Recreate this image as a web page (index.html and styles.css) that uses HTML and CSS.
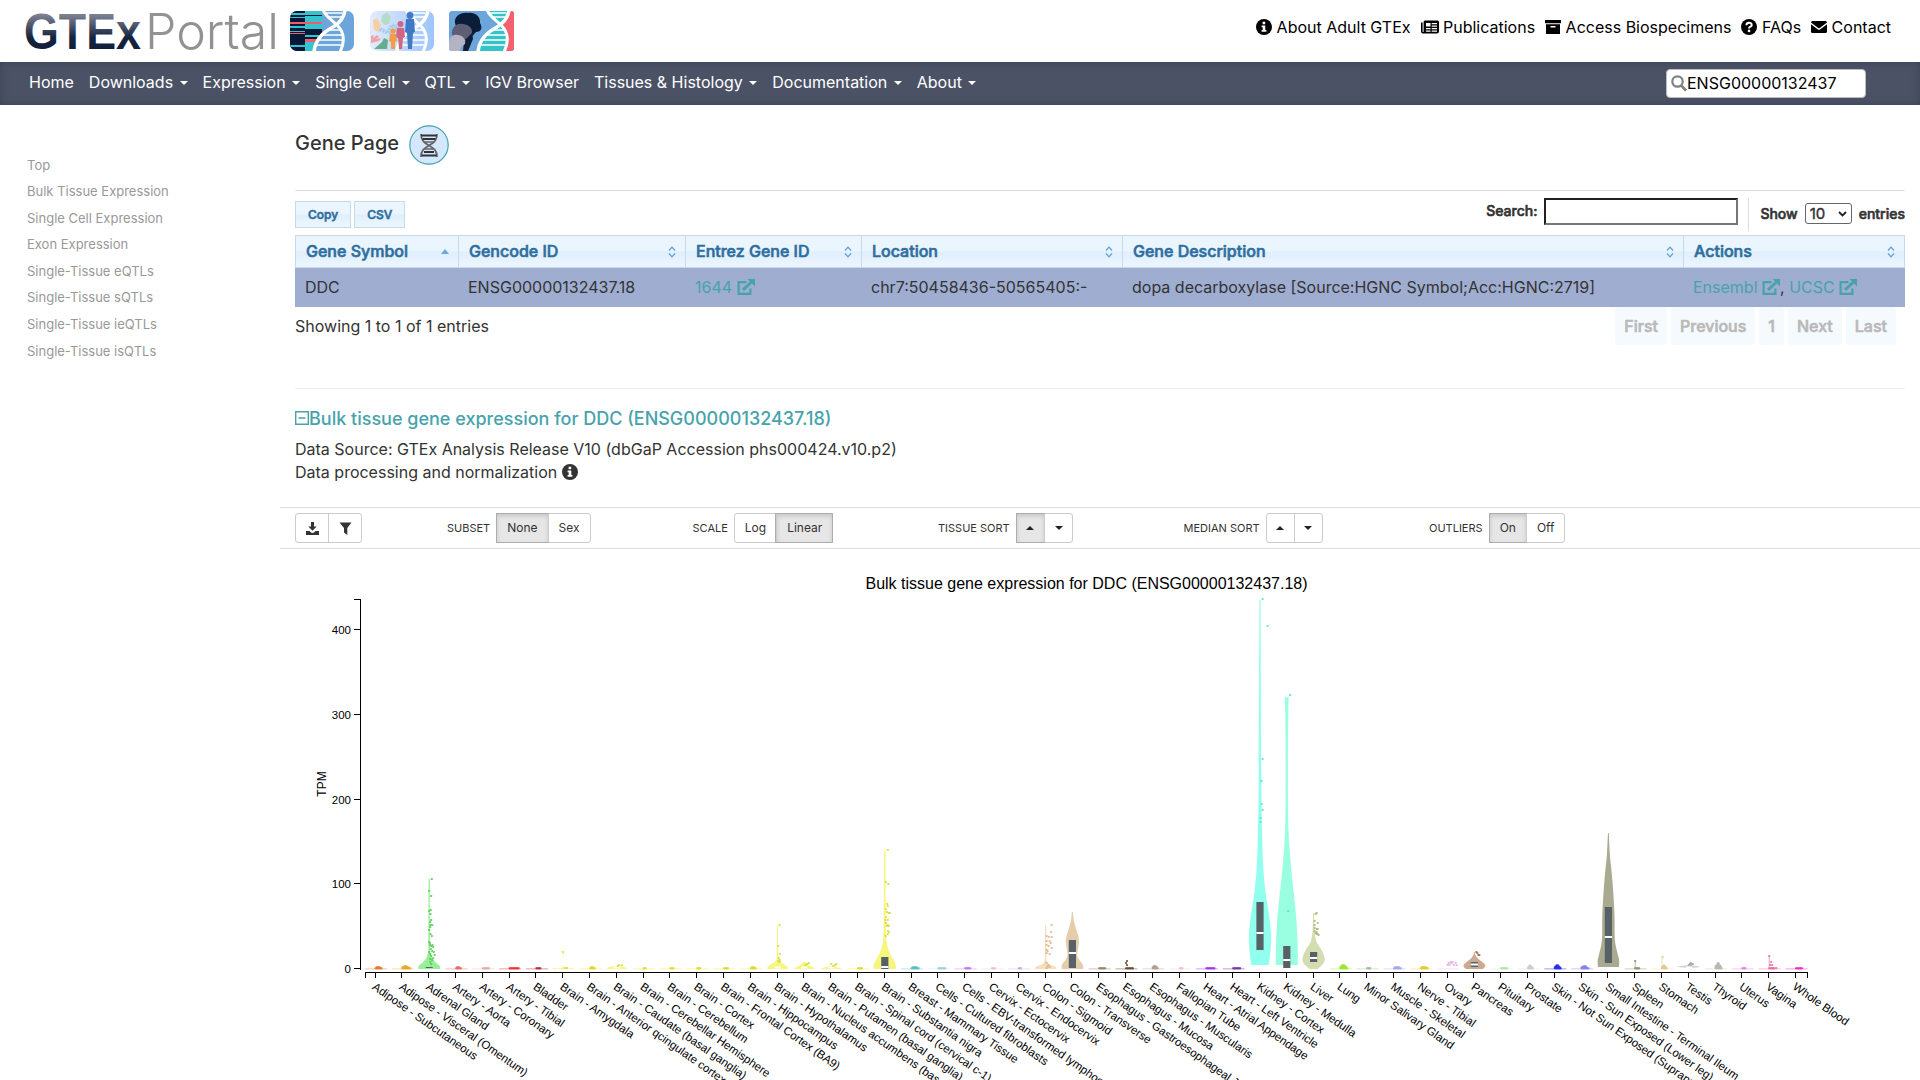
FILE: index.html
```html
<!DOCTYPE html>
<html lang="en">
<head>
<meta charset="utf-8">
<title>GTEx Portal - Gene Page</title>
<link rel="stylesheet" href="styles.css">
</head>
<body>
<svg class="defs" width="0" height="0">
  <defs>
    <linearGradient id="logoFill" x1="0" y1="0" x2="0" y2="1"><stop offset="0.2" stop-color="#7a8091"/><stop offset="0.6" stop-color="#16233f"/><stop offset="1" stop-color="#0d1c38"/></linearGradient>
    <linearGradient id="paleSky"><stop offset="0" stop-color="#e3ecfb"/><stop offset="1" stop-color="#9cc4fa"/></linearGradient>
    <clipPath id="tile"><rect width="64" height="40" rx="7"/></clipPath>
    <clipPath id="tileWide"><rect width="65" height="40" rx="3"/></clipPath>
    <symbol id="helix" viewBox="0 0 40 40">
      <g fill="none" stroke="#fff">
        <path d="M14 2h16M17 6h12M14 19h16M9 24h23M5 29h26M3 34h26" stroke-width="1.600"/>
        <path d="M11-1C14 6 20 9 25 14c7 7 9 15 3 27" stroke-width="3"/>
        <path d="M33-1C32 7 28 12 21 16 10 22 3 29 2 41" stroke-width="3.600"/>
      </g>
    </symbol>
    <symbol id="info" viewBox="0 0 16 16"><circle cx="8" cy="8" r="8"/><path fill="#fff" d="M6.6 2.7h2.6v2.5H6.6zM5.6 6.4h3.7v4.5h1.1v1.9H5.6v-1.9h1.1V8.3H5.6z"/></symbol>
    <symbol id="external" viewBox="0 0 18 16"><path fill="none" stroke="currentColor" stroke-width="2.200" d="M9.500 3.200H1.600V14.800h11.800V9.500"/><path fill="none" stroke="currentColor" stroke-width="3" d="M6 10.800 14.500 3"/><path fill="currentColor" d="M10.500 0H18v7.500z"/></symbol>
    <symbol id="sort" viewBox="0 0 8 12"><path d="M1 4.500 4 1.200 7 4.500M1 7.500 4 10.800 7 7.500" fill="none" stroke="#5a9fd4" stroke-width="1.200"/></symbol>
  </defs>
</svg>

<header class="top">
  <div class="brand">
    <svg class="logo" width="256" height="62" viewBox="0 0 256 62">
      <text class="logo-bold" x="0" y="49" textLength="117" lengthAdjust="spacingAndGlyphs">GTEx</text>
      <text class="logo-thin" x="121" y="49" textLength="134" lengthAdjust="spacingAndGlyphs">Portal</text>
    </svg>
    <svg class="tile t1" width="64" height="40" viewBox="0 0 64 40"><g clip-path="url(#tile)">
      <path fill="#6ca5d9" d="M0 0h64v40H0z"/><path fill="#071838" d="M0 0h15v40H0z"/><path fill="#35c3cd" d="M15 0h17v40H15z"/>
      <path fill="#35c3cd" d="M0 2h15v2H0zM0 6h15v1H0zM0 15h15v2H0zM0 20h15v1H0zM0 34h15v2H0z"/><path fill="#ee5f6b" d="M0 11h15v2H0zM0 22h15v1H0zM15 11h17v2H15zM15 28h11v3H15z"/><path fill="#071838" d="M15 4h17v1H15zM15 18h17v6H15zM15 26h14v2H15z"/>
      <path fill="#6ca5d9" d="M34 19 27 27 24 40h22l9-12-8-12z"/>
      <use href="#helix" x="22" y="0" width="40" height="40"/></g></svg>
    <svg class="tile t2" width="64" height="40" viewBox="0 0 64 40"><g clip-path="url(#tile)">
      <path fill="url(#paleSky)" d="M0 0h64v40H0z"/><use href="#helix" x="25" y="0" width="40" height="40"/>
      <path fill="#b5dccb" d="M12 5l5-4 4 5-2 7-5 1-3-4z"/><path fill="#f6cfa3" d="M3 9l4-2 4 7-2 7-5-2z"/><path fill="#f0a3ad" d="M1 25l3-1-1 3 4-3 2 2-3 2 5-1-2 3-4 1-4 1z"/><path fill="none" stroke="#a9c8ec" stroke-width="4" stroke-dasharray="2 1" d="M10 18l8 4 4-8 6 3-8 8"/>
      <path fill="#68ac8e" d="M4 38l8-7 2-4 4 2-1 9z"/><circle cx="23" cy="20" r="2.600" fill="#f49d46"/><path fill="#f49d46" d="M20 23h6l1 7-2 1v7h-4v-7l-2-1z"/><circle cx="30.500" cy="13" r="3" fill="#ce6684"/><path fill="#ce6684" d="M27 17h7l1 9-2 1-1 11h-3l-1-11-2-1z"/><circle cx="40" cy="4.500" r="3.400" fill="#4079c4"/><path fill="#4079c4" d="M36 8h8l1 13-2 1-1 16h-4l-1-16-2-1z"/></g></svg>
    <svg class="tile t3" width="65" height="40" viewBox="0 0 65 40"><g clip-path="url(#tileWide)">
      <path fill="#6ca5d9" d="M0 0h65v40H0z"/><path fill="#f4606c" d="M65 0H60L50 15l9 13-3 12h9z"/><path fill="#35c3c8" d="M40 0h20L52 14l7 12-3 14H29c2-11 10-17 20-24z"/>
      <path fill="#0b1d38" d="M6 12C5 5 12 1 19 2c6-1 13 3 12 10 3 5 1 9-4 9l-8 9-9-4z"/><path fill="#0b1d38" d="M14 40l1-9 8-10 1 7-5 12z"/><path fill="#5f5d74" d="M3 24c-1-8 5-12 10-11 6 0 11 4 10 9l-6 6-8 1z"/><path fill="#b4b3c4" d="M0 31c1-6 5-8 9-7 6 1 8 5 7 9l-4 3-1 4H0z"/>
      <use href="#helix" x="27" y="0" width="40" height="40"/></g></svg>
  </div>
  <nav class="quick">
    <a><svg width="16" height="16"><use href="#info"/></svg>About Adult GTEx</a>
    <a><svg width="18" height="16" viewBox="0 0 18 16"><path fill-rule="evenodd" d="M4 1.500h12.500Q18 1.500 18 3v9.500q0 2-2 2H2q-2 0-2-2V3.500h1.600v9q0 .6.500.6t.5-.6V3Q2.600 1.500 4 1.500zM5 4v3.500h4.500V4zm5.700 0v1.300H16V4zm0 2.400v1.300H16V6.400zM5 9v1.300h4.500V9zm5.700 0v1.300H16V9zM5 11.400v1.300h4.500v-1.300zm5.700 0v1.300H16v-1.300z"/></svg>Publications</a>
    <a><svg width="16" height="16" viewBox="0 0 16 16"><path fill-rule="evenodd" d="M0 1h16v3.300H0zM1 5.300h14V15H1zM5.500 7v1.600h5V7z"/></svg>Access Biospecimens</a>
    <a><svg width="16" height="16" viewBox="0 0 16 16"><circle cx="8" cy="8" r="8"/><path d="M5.400 6.200C5.500 4.500 6.500 3.800 8 3.800c3.400 0 3.400 3.300 1 4.100-.8.300-1 .7-1 1.500" fill="none" stroke="#fff" stroke-width="1.900"/><circle cx="8" cy="11.900" r="1.300" fill="#fff"/></svg>FAQs</a>
    <a><svg width="16" height="16" viewBox="0 0 16 16"><path d="M0 3.500Q0 2 1.500 2h13Q16 2 16 3.500L8.800 9q-.8.600-1.600 0zM0 5.200l6.600 5q1.400 1 2.800 0l6.600-5v7.300q0 1.500-1.500 1.500h-13Q0 14 0 12.500z"/></svg>Contact</a>
  </nav>
</header>

<div class="navbar">
  <nav class="menu">
    <a>Home</a><a class="drop">Downloads</a><a class="drop">Expression</a><a class="drop">Single Cell</a><a class="drop">QTL</a><a>IGV Browser</a><a class="drop">Tissues &amp; Histology</a><a class="drop">Documentation</a><a class="drop">About</a>
  </nav>
  <div class="find"><svg width="16" height="17" viewBox="0 0 16 17"><circle cx="6.500" cy="6.500" r="5.200" fill="none" stroke="#808080" stroke-width="2.200"/><path d="M10.300 10.600 15 15.600" stroke="#808080" stroke-width="2.800"/></svg><span>ENSG00000132437</span></div>
</div>

<div class="page">
  <aside class="toc">
    <a>Top</a><a>Bulk Tissue Expression</a><a>Single Cell Expression</a><a>Exon Expression</a><a>Single-Tissue eQTLs</a><a>Single-Tissue sQTLs</a><a>Single-Tissue ieQTLs</a><a>Single-Tissue isQTLs</a>
  </aside>
  <main>
    <div class="inner">
      <h1><span>Gene Page</span>
        <svg width="40" height="40" viewBox="0 0 40 40"><circle cx="20" cy="20" r="19.200" fill="#d3e7fe" stroke="#47a3ab" stroke-width="1.200"/>
          <g fill="none" stroke="#666" stroke-width="1.800"><path d="M12 9c0 7 4 9 8 11.500 5 3 8 5 8 11.500M28 9c0 7-4 9-8 11.500-5 3-8 5-8 11.500"/><path stroke="#333" d="M12 10.500h16M13.500 14h13M15 27h10M12.500 30.500h15"/><path stroke-width="1.300" d="M15 17h10M15.500 24h9"/></g></svg>
      </h1>
      <div class="tools">
        <div class="exports"><span class="export">Copy</span><span class="export">CSV</span></div>
        <div class="filters">
          <label class="search">Search:<span class="box"></span></label>
          <label class="length">Show <span class="select">10<svg width="9" height="6" viewBox="0 0 9 6"><path d="M1 1l3.500 3.500L8 1" fill="none" stroke="#222" stroke-width="1.800"/></svg></span> entries</label>
        </div>
      </div>
      <div class="grid head">
        <div>Gene Symbol<i class="asc"></i></div><div>Gencode ID<svg width="8" height="12"><use href="#sort"/></svg></div><div>Entrez Gene ID<svg width="8" height="12"><use href="#sort"/></svg></div><div>Location<svg width="8" height="12"><use href="#sort"/></svg></div><div>Gene Description<svg width="8" height="12"><use href="#sort"/></svg></div><div>Actions<svg width="8" height="12"><use href="#sort"/></svg></div>
      </div>
      <div class="grid row">
        <div>DDC</div><div>ENSG00000132437.18</div><div><a>1644 <svg width="18" height="16"><use href="#external"/></svg></a></div><div>chr7:50458436-50565405:-</div><div>dopa decarboxylase [Source:HGNC Symbol;Acc:HGNC:2719]</div><div><a>Ensembl <svg width="18" height="16"><use href="#external"/></svg></a>, <a>UCSC <svg width="18" height="16"><use href="#external"/></svg></a></div>
      </div>
      <div class="foot">
        <div class="count">Showing 1 to 1 of 1 entries</div>
        <div class="pager"><span>First</span><span>Previous</span><span>1</span><span>Next</span><span>Last</span></div>
      </div>
      <section class="bulk">
        <h2><svg width="14" height="14" viewBox="0 0 14 14"><path d="M.7.7h12.600v12.600H.7zM3.500 7h7" fill="none" stroke="#47a3ab" stroke-width="1.400"/></svg>Bulk tissue gene expression for DDC (ENSG00000132437.18)</h2>
        <p>Data Source: GTEx Analysis Release V10 (dbGaP Accession phs000424.v10.p2)</p>
        <p>Data processing and normalization <svg width="16" height="16" fill="#333"><use href="#info"/></svg></p>
      </section>
    </div>
    <div class="toolbar">
      <div class="set"><div class="group icons"><span><svg width="13" height="13" viewBox="0 0 13 13"><path d="M5 0h3v4.500h2.700L6.500 8.700 2.300 4.500H5zM0 9h3.500l1.200 1.300q1.800 1.200 3.600 0L9.500 9H13v4H0z" fill="#333"/></svg></span><span><svg width="13" height="13" viewBox="0 0 13 13"><path d="M.5.500h12L8.300 6v7L5 10.500V6z" fill="#333"/></svg></span></div></div>
      <div class="set">SUBSET<div class="group"><span class="on">None</span><span>Sex</span></div></div>
      <div class="set">SCALE<div class="group"><span>Log</span><span class="on">Linear</span></div></div>
      <div class="set">TISSUE SORT<div class="group"><span class="on"><i class="up"></i></span><span><i class="down"></i></span></div></div>
      <div class="set">MEDIAN SORT<div class="group"><span><i class="up"></i></span><span><i class="down"></i></span></div></div>
      <div class="set">OUTLIERS<div class="group"><span class="on">On</span><span>Off</span></div></div>
    </div>
    <svg class="chart" id="chart" width="1640" height="531" viewBox="280 549 1640 531"></svg>
  </main>
</div>
<script src="chart.js"></script>
</body>
</html>
```

FILE: styles.css
```css
* { box-sizing: border-box; }
body { margin: 0; width: 1920px; height: 1080px; overflow: hidden; background: #fff; color: #333; font: 16px/23px Inter, "Liberation Sans", sans-serif; }
.defs { display: block; width: 0; height: 0; }
h1, h2, p { margin: 0; font-weight: 500; }

.top { height: 62px; display: flex; justify-content: space-between; padding: 0 29px 0 24px; }
.brand { display: flex; align-items: flex-start; }
.brand .logo { margin-right: 10px; overflow: visible; }
.tile { margin-top: 11px; }
.t2 { margin-left: 16px; }
.t3 { margin-left: 15px; }
.logo-bold { font: 700 50px "Liberation Sans", sans-serif; fill: url(#logoFill); }
.logo-thin { font: 300 49px Inter, sans-serif; fill: #929292; }
.quick { display: flex; gap: 10px; height: 54px; align-items: center; color: #000; }
.quick a { display: flex; gap: 4.5px; align-items: center; white-space: nowrap; }

.navbar { height: 43px; background: #4b5266; box-shadow: inset 0 0 8px #3d4256; display: flex; justify-content: space-between; align-items: center; padding: 0 54px 0 29px; color: #fff; }
.menu { display: flex; gap: 15px; margin-top: -2px; white-space: nowrap; }
.drop::after { content: ""; display: inline-block; margin-left: 6.5px; vertical-align: 3px; border: 4px solid transparent; border-top-color: #fff; border-bottom: 0; }
.find { width: 200px; height: 29px; margin-top: -1px; background: #fff; border: 1px solid #bbb; border-radius: 4px; display: flex; align-items: center; padding-left: 4px; color: #000; }

.page { display: grid; grid-template-columns: 280px 1640px; }
.toc { padding: 46.5px 0 0 27px; display: flex; flex-direction: column; font-size: 13px; line-height: 26.6px; color: #999; }
main { min-width: 0; }
.inner { width: 1610px; margin-left: 15px; }
h1 { height: 85px; padding-top: 20px; display: flex; gap: 10px; font-size: 20px; line-height: 36px; }
.tools { height: 45px; border-top: 1px solid #ddd; display: flex; justify-content: space-between; }
.export, .filters, .head, .pager { font-weight: 500; -webkit-text-stroke: .6px currentColor; }
.exports { display: flex; gap: 3px; padding-top: 10px; }
.export { height: 27px; padding: 0 12px; border: 1px solid #c5dbec; background: linear-gradient(#eaf5fe 48%, #dfeffc 52%, #edf6fe); font-size: 12px; line-height: 25px; color: #2e6e9e; }
.filters { display: flex; font-size: 14px; white-space: nowrap; }
.search { display: flex; height: 41px; padding-top: 7px; line-height: 26px; }
.box { width: 194px; height: 27px; margin-left: 7px; border: 2px inset #767676; }
.length { height: 33px; margin: 7px 0 0 10px; padding: 5px 0 0 11px; border-left: 1px solid #ddd; display: flex; gap: 7px; line-height: 21px; }
.select { width: 47px; height: 21px; border: 1px solid #666; border-radius: 3px; padding: 0 4px; display: flex; align-items: center; justify-content: space-between; font-weight: 400; font-size: 15px; -webkit-text-stroke: .4px #333; line-height: 18px; }

.grid { display: grid; grid-template-columns: 163px 227px 176px 261px 561px 222px; white-space: nowrap; }
.head { height: 33px; border: 1px solid #c5dbec; border-width: 1px 0; background: linear-gradient(#eaf5fe 48%, #dfeffc 52%, #edf6fe); color: #2e6e9e; line-height: 31px; }
.head div { border-left: 1px solid #c5dbec; padding: 0 9px 0 10px; display: flex; justify-content: space-between; align-items: center; }
.head div:last-child { border-right: 1px solid #c5dbec; }
.asc { border: 4px solid transparent; border-bottom: 5px solid #6ba8dc; border-top: 0; }
.row { height: 39px; background: #9fadd1; line-height: 38px; }
.row div { padding-left: 10px; }
a svg { vertical-align: -1px; }
.row a svg { vertical-align: -2px; }
.row a, h2 { color: #47a3ab; }
.foot { height: 81px; display: flex; justify-content: space-between; }
.count { line-height: 39px; }
.pager { display: flex; gap: 4px; padding-right: 9px; color: #b9b9b9; }
.pager span { height: 38px; line-height: 38px; padding: 0 9px; background: #f5faff; border-radius: 3px; }

.bulk { border-top: 1px solid #eee; height: 119px; padding-top: 18px; }
h2 { font-size: 18px; line-height: 24px; margin-bottom: 7px; }
h2 svg { vertical-align: 0; }
.bulk p { font-weight: 400; }
.bulk p svg { vertical-align: -2px; }
.toolbar { height: 42px; border: 1px solid #ddd; border-width: 1px 0; padding-left: 15px; display: grid; grid-template-columns: 152px repeat(5, 245.500px); align-items: center; }
.set { display: flex; align-items: center; gap: 6px; white-space: nowrap; font-size: 11px; }
.group { display: flex; height: 30px; border: 1px solid #ccc; border-radius: 3px; line-height: 26px; font-size: 12px; }
.group span { padding: 0 10px; display: flex; align-items: center; padding-bottom: 1px; }
.icons span { padding: 0 9.500px; }
.group span:has(i) { padding: 0 9.600px; }
.group span + span { border-left: 1px solid #ccc; }
.group .on { background: #e6e6e6; box-shadow: inset 0 2px 4px rgba(0,0,0,.14), 0 0 0 1px #adadad; }
.up, .down { border: 4px solid transparent; }
.up { border-bottom-color: #222; border-top: 0; }
.down { border-top-color: #222; border-bottom: 0; }
.chart { display: block; font-family: "Liberation Sans", Arial, sans-serif; }
.chart .tick { font-size: 11.500px; }
.chart .axis { stroke: #000; fill: none; shape-rendering: crispEdges; }
```

FILE: chart.js
```js
const BASE = 969, STEP = 26.8, FIRST = 375.6;

// Each tissue: name, colour, and optionally violin profile [y, half-width],
// outliers [dx, y], box [top, bottom, median] and heap [width, height].
const brain = 'EEEE00';
const tissues = [
  { n: 'Adipose - Subcutaneous', c: 'FF6600', heap: [7, 2] },
  { n: 'Adipose - Visceral (Omentum)', c: 'FFAA00', heap: [9, 3] },
  { n: 'Adrenal Gland', c: '33DD33', v: [[879, .6], [945, .8], [954, 1.5], [958, 3], [962, 6], [966, 10.5], [969, 11]],
    o: [[2.6,879],[0,891],[2,896],[1.6,910],[0,911],[1.3,914],[2,920],[1,922],[1.3,925],[3,925],[1,927],[0,930],[1.3,934],[2.6,936],[0,942],[.6,943],[1,945],[3.3,945],[2,946],[4,947],[1.6,949],[3,951],[0,952],[4.5,952],[1,954],[5.500,955],[2,956],[4,958],[1,959],[3,960],[1,962],[2,964]], line: 967.5 },
  { n: 'Artery - Aorta', c: 'FF5555', heap: [6, 2] },
  { n: 'Artery - Coronary', c: 'FFAA99', heap: [7, 1] },
  { n: 'Artery - Tibial', c: 'FF0000', heap: [10, 1] },
  { n: 'Bladder', c: 'AA0000', heap: [5, 1] },
  { n: 'Brain - Amygdala', c: brain, v: [[952, .5], [967, .7], [968, 10], [969, 10]], o: [[0, 952], [2, 968], [4, 968]] },
  { n: 'Brain - Anterior qcingulate cortex (BA24)', c: brain, heap: [6, 2] },
  { n: 'Brain - Caudate (basal ganglia)', c: brain, v: [[966, 2], [967.500, 9], [969, 10]], o: [[1, 966], [2, 965], [5, 965]], gap: 1 },
  { n: 'Brain - Cerebellar Hemisphere', c: brain, heap: [3, 0] },
  { n: 'Brain - Cerebellum', c: brain, heap: [4, 1] },
  { n: 'Brain - Cortex', c: brain, heap: [4, 0] },
  { n: 'Brain - Frontal Cortex (BA9)', c: brain, heap: [5, 0] },
  { n: 'Brain - Hippocampus', c: brain, heap: [6, 2] },
  { n: 'Brain - Hypothalamus', c: brain, v: [[925, .5], [957, .8], [961, 2], [964, 6], [967, 10], [969, 10.500]], o: [[2, 925], [.6, 946], [2.3, 954], [1, 958], [2, 960], [.5, 961], [2, 962]], gap: 1 },
  { n: 'Brain - Nucleus accumbens (basal ganglia)', c: brain, v: [[962, 1], [965, 4], [967.500, 9], [969, 11]], o: [[1, 965], [3, 964], [4.500, 963]], gap: 1 },
  { n: 'Brain - Putamen (basal ganglia)', c: brain, v: [[966, 2], [968, 8], [969, 11]], o: [[0, 964], [2, 966], [4, 965], [5, 964]], gap: 1 },
  { n: 'Brain - Spinal cord (cervical c-1)', c: brain, heap: [5, 1] },
  { n: 'Brain - Substantia nigra', c: brain, v: [[851, .8], [920, 1], [938, 1.500], [947, 3], [955, 6], [960, 9], [965, 11], [969, 11]],
    o: [[3,850],[1,882],[3.500,884],[2.500,904],[3,906],[1,909],[2,912],[5,913],[4,913],[1,917],[.5,920],[3,920],[1,923],[3,925],[2,926],[4,926],[3,931],[4,932],[3,934],[1,936]], b: [957, 969, 967] },
  { n: 'Breast - Mammary Tissue', c: '33CCCC', heap: [8, 2] },
  { n: 'Cells - Cultured fibroblasts', c: 'AAEEFF', heap: [8, 1], dot: '99cfd4' },
  { n: 'Cells - EBV-transformed lymphocytes', c: 'CC66FF', heap: [6, 1] },
  { n: 'Cervix - Ectocervix', c: 'FFCCCC', heap: [4, 1] },
  { n: 'Cervix - Endocervix', c: 'CCAADD', heap: [3, 0] },
  { n: 'Colon - Sigmoid', c: 'EEBB77', v: [[925, .6], [955, .7], [962, 1.500], [965, 5], [967, 10], [969, 10.500]],
    o: [[6,925],[5.500,932],[1,936],[3,937],[6,937],[1,941],[4,941],[5,943],[1,945],[3,946],[6,948],[1,950],[2,951],[1,953],[4,954],[1,963],[3,965],[2,966],[4,967],[1,968]] },
  { n: 'Colon - Transverse', c: 'CC9955', v: [[912, .5], [921, 1.500], [930, 4], [938, 6.300], [945, 6.300], [952, 5], [957, 5.300], [962, 8.500], [965, 10.500], [969, 10.800]], b: [940, 968, 953] },
  { n: 'Esophagus - Gastroesophageal Junction', c: '8B7355', heap: [7, 0] },
  { n: 'Esophagus - Mucosa', c: '552200', heap: [8, 1], o: [[1, 961], [0, 963], [1, 965]] },
  { n: 'Esophagus - Muscularis', c: 'BB9988', heap: [6, 3] },
  { n: 'Fallopian Tube', c: 'FFCCCC', heap: [4, 1] },
  { n: 'Heart - Atrial Appendage', c: '9900FF', heap: [9, 1] },
  { n: 'Heart - Left Ventricle', c: '660099', heap: [8, 0] },
  { n: 'Kidney - Cortex', c: '22FFDD', v: [[600, .6], [780, 1.300], [830, 2], [863, 3], [885, 4.700], [902, 7], [918, 9.500], [935, 11], [947, 10.800], [957, 9.800], [965, 8.800]],
    o: [[2.600,599],[7.600,626],[2.600,759],[1.600,781],[1.600,804],[2.600,810],[.6,818],[.6,822]], b: [902, 950, 933] },
  { n: 'Kidney - Medulla', c: '33FFC2', v: [[697, 1.800], [740, 1.200], [800, 1.200], [830, 1.700], [852, 3], [875, 5], [900, 7.700], [920, 9.600], [943, 10.800], [965, 11]], o: [[3.300, 695], [1.300, 911]], b: [946, 968, 960] },
  { n: 'Liver', c: 'AABB66', v: [[913, .5], [927, .8], [937, 1.800], [943, 3.500], [950, 8], [956, 10.500], [961, 11], [965, 8.500], [969, 4]],
    o: [[3,913],[2,914],[1,921],[4,923],[1,925],[1,928],[3,929],[4,929],[1,931],[3,932],[2,933],[4,934],[5,935],[3,934]], b: [952, 962, 958] },
  { n: 'Lung', c: '99FF00', heap: [8, 4] },
  { n: 'Minor Salivary Gland', c: '99BB88', heap: [4, 0] },
  { n: 'Muscle - Skeletal', c: 'AAAAFF', heap: [8, 2] },
  { n: 'Nerve - Tibial', c: 'FFD700', heap: [8, 2] },
  { n: 'Ovary', c: 'FFAAFF', heap: [0, 0], o: [[0,965],[1,963],[2,965],[3,962],[4,963],[5,962],[6,965],[8,963],[9,965]] },
  { n: 'Pancreas', c: '995522', v: [[952, .4], [955, 1], [959, 4], [963, 9], [966, 11], [969, 8.500]], o: [[2, 952], [3, 953], [4, 955], [5, 955]], b: [962, 967, 964.500] },
  { n: 'Pituitary', c: 'AAFF99', heap: [7, 1] },
  { n: 'Prostate', c: 'DDDDDD', heap: [6, 4] },
  { n: 'Skin - Not Sun Exposed (Suprapubic)', c: '0000FF', heap: [7, 4] },
  { n: 'Skin - Sun Exposed (Lower leg)', c: '7777FF', heap: [8, 3] },
  { n: 'Small Intestine - Terminal Ileum', c: '555522', v: [[833, .4], [855, 1.500], [870, 3], [887, 4.500], [903, 5.500], [920, 6.200], [933, 6.200], [943, 6.800], [953, 9], [960, 10.700], [967, 10.500]], b: [907, 963, 937] },
  { n: 'Spleen', c: '778855', heap: [5, 1], o: [[0, 961]], stem: 961 },
  { n: 'Stomach', c: 'FFDD99', heap: [6, 4], o: [[.6, 957]], stem: 957, dot: 'e3c98f' },
  { n: 'Testis', c: 'AAAAAA', v: [[965, 1], [966, 8], [967, 11], [968, 2]], o: [[0,965],[1,964],[2,963],[3,964],[4,964],[2,965]], gap: 1 },
  { n: 'Thyroid', c: 'C0C0B8', heap: [7, 6] },
  { n: 'Uterus', c: 'FF66FF', heap: [4, 0] },
  { n: 'Vagina', c: 'FF5599', heap: [6, 0], o: [[0,956],[2,962],[1,965],[3,965],[4,968],[7,968]], stem: 956 },
  { n: 'Whole Blood', c: 'FF00BB', heap: [7, 1] }
];

const f = v => v.toFixed(1);

// Smooth one side of a violin with Catmull-Rom style Bezier segments.
function side(points) {
  let d = '';
  for (let i = 1; i < points.length; i++) {
    const p0 = points[Math.max(i - 2, 0)], p1 = points[i - 1], p2 = points[i], p3 = points[Math.min(i + 1, points.length - 1)];
    d += `C${f(p1[0] + (p2[0] - p0[0]) / 6)} ${f(p1[1] + (p2[1] - p0[1]) / 6)} ${f(p2[0] - (p3[0] - p1[0]) / 6)} ${f(p2[1] - (p3[1] - p1[1]) / 6)} ${f(p2[0])} ${f(p2[1])}`;
  }
  return d;
}

function violin(x, profile) {
  const right = profile.map(([y, w]) => [x + w, y]);
  const left = profile.map(([y, w]) => [x - w, y]).reverse();
  return `M${right[0]}${side(right)}L${left[0]}${side(left)}Z`;
}

function shade(hex) {
  return '#' + [0, 2, 4].map(i => {
    const v = parseInt(hex.substr(i, 2), 16);
    return Math.round(v * 0.72 + 46).toString(16).padStart(2, '0');
  }).join('');
}

let out = '<text x="1086.500" y="589" font-size="16" text-anchor="middle">Bulk tissue gene expression for DDC (ENSG00000132437.18)</text>';
out += '<text font-size="12" text-anchor="middle" transform="translate(326 784) rotate(-90)">TPM</text>';
out += '<path class="axis" d="M354 599.500H360.500V969.500"/>';
[0, 100, 200, 300, 400].forEach(v => {
  const y = Math.floor(968.5 - v * 0.847) + 0.5;
  out += `<path class="axis" d="M354 ${y}H360"/><text class="tick" x="351" y="${y + 4}" text-anchor="end">${v}</text>`;
});
out += '<path class="axis" d="M365.500 978V972.500H1807.500V978"/>';

tissues.forEach((t, i) => {
  const x = FIRST + i * STEP;
  const dot = t.dot ? '#' + t.dot : shade(t.c);
  if (t.v) out += `<path d="${violin(x, t.v)}" fill="#${t.c}" opacity=".5"/>`;
  else out += `<rect x="${f(x - 10.500)}" y="968" width="22" height="1.600" fill="#${t.c}" opacity=".25"/>`;
  if (t.gap) out += `<rect x="${f(x - 3)}" y="966.500" width="6" height="2" fill="#fff"/>`;
  if (t.stem) out += `<rect x="${f(x - .5)}" y="${t.stem}" width="1" height="${BASE - t.stem}" fill="${dot}" opacity=".6"/>`;
  if (t.line) out += `<rect x="${f(x - 3.500)}" y="${t.line - .5}" width="7" height="1" fill="#55606a"/>`;
  if (t.b) {
    const [top, bottom, mid] = t.b;
    out += `<rect x="${f(x - 3.600)}" y="${top}" width="7.200" height="${bottom - top}" fill="#566168"/><rect x="${f(x - 3.600)}" y="${mid - 1}" width="7.200" height="2" fill="#fff"/>`;
  }
  const dots = (t.o || []).slice();
  if (t.heap) {
    const [w, h] = t.heap;
    for (let k = 0; k < w; k++) {
      const rise = h * Math.max(0, 1 - Math.abs(k - w * .35) / (w * .6));
      for (let y = 0; y <= rise; y++) dots.push([k, 968.300 - y]);
    }
  }
  out += dots.map(([dx, y]) => `<rect x="${f(x + dx - 1)}" y="${f(y - 1)}" width="2" height="2" rx=".5" fill="${dot}" opacity=".85"/>`).join('');
  const tx = Math.round(x) - .5;
  out += `<path class="axis" d="M${tx} 973V978"/>`;
  out += `<text class="tick" transform="translate(${f(x - 4)} 988.500) rotate(35)">${t.n}</text>`;
});
document.getElementById('chart').innerHTML = out;
```
